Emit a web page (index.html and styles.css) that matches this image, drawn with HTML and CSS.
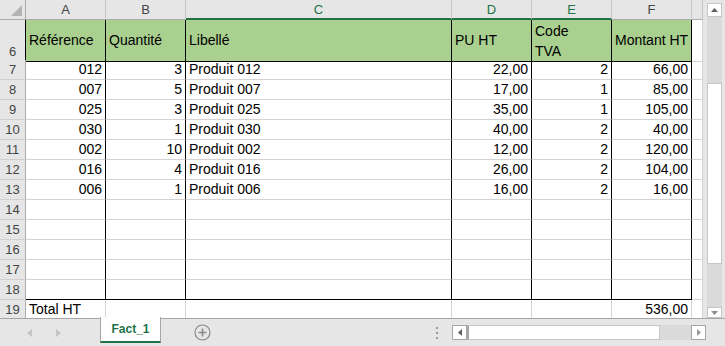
FILE: index.html
```html
<!DOCTYPE html>
<html lang="fr">
<head>
<meta charset="UTF-8">
<title>Fact_1</title>
<link rel="stylesheet" href="styles.css">
</head>
<body>

<div class="top">
  <div class="sheet">
    <div class="row cols">
      <div class="corner">
        <svg width="25" height="19" viewBox="0 0 25 19"><polygon points="22,5 22,16 11,16" fill="#b4b4b4"/></svg>
      </div>
      <div>A</div>
      <div>B</div>
      <div class="sel">C</div>
      <div class="sel">D</div>
      <div class="sel">E</div>
      <div>F</div>
      <div></div>
    </div>

    <div class="row titles boxed">
      <div class="rh">6</div>
      <div>Référence</div>
      <div>Quantité</div>
      <div>Libellé</div>
      <div>PU HT</div>
      <div class="wrap">Code<br>TVA</div>
      <div>Montant HT</div>
      <div></div>
    </div>

    <div class="row boxed"><div class="rh">7</div><div class="r">012</div><div class="r">3</div><div>Produit 012</div><div class="r">22,00</div><div class="r">2</div><div class="r">66,00</div><div></div></div>
    <div class="row boxed"><div class="rh">8</div><div class="r">007</div><div class="r">5</div><div>Produit 007</div><div class="r">17,00</div><div class="r">1</div><div class="r">85,00</div><div></div></div>
    <div class="row boxed"><div class="rh">9</div><div class="r">025</div><div class="r">3</div><div>Produit 025</div><div class="r">35,00</div><div class="r">1</div><div class="r">105,00</div><div></div></div>
    <div class="row boxed"><div class="rh">10</div><div class="r">030</div><div class="r">1</div><div>Produit 030</div><div class="r">40,00</div><div class="r">2</div><div class="r">40,00</div><div></div></div>
    <div class="row boxed"><div class="rh">11</div><div class="r">002</div><div class="r">10</div><div>Produit 002</div><div class="r">12,00</div><div class="r">2</div><div class="r">120,00</div><div></div></div>
    <div class="row boxed"><div class="rh">12</div><div class="r">016</div><div class="r">4</div><div>Produit 016</div><div class="r">26,00</div><div class="r">2</div><div class="r">104,00</div><div></div></div>
    <div class="row boxed"><div class="rh">13</div><div class="r">006</div><div class="r">1</div><div>Produit 006</div><div class="r">16,00</div><div class="r">2</div><div class="r">16,00</div><div></div></div>
    <div class="row boxed"><div class="rh">14</div><div></div><div></div><div></div><div></div><div></div><div></div><div></div></div>
    <div class="row boxed"><div class="rh">15</div><div></div><div></div><div></div><div></div><div></div><div></div><div></div></div>
    <div class="row boxed"><div class="rh">16</div><div></div><div></div><div></div><div></div><div></div><div></div><div></div></div>
    <div class="row boxed"><div class="rh">17</div><div></div><div></div><div></div><div></div><div></div><div></div><div></div></div>
    <div class="row boxed end"><div class="rh">18</div><div></div><div></div><div></div><div></div><div></div><div></div><div></div></div>
    <div class="row"><div class="rh">19</div><div>Total HT</div><div></div><div></div><div></div><div></div><div class="r">536,00</div><div></div></div>
  </div>

  <div class="vscroll">
    <div class="sbtn vbtn">
      <svg width="7" height="4" viewBox="0 0 7 4"><polygon points="0,4 7,4 3.5,0" fill="#606060"/></svg>
    </div>
    <div class="vtrack"><div class="vthumb"></div></div>
    <div class="sbtn vbtn down">
      <svg width="7" height="4" viewBox="0 0 7 4"><polygon points="0,0 7,0 3.5,4" fill="#8c8c8c"/></svg>
    </div>
  </div>
</div>

<div class="tabs">
  <div class="tab-nav">
    <svg width="5" height="8" viewBox="0 0 5 8"><polygon points="5,0 5,8 0,4" fill="#c4c4c4"/></svg>
    <svg width="5" height="8" viewBox="0 0 5 8"><polygon points="0,0 0,8 5,4" fill="#c4c4c4"/></svg>
  </div>
  <div class="tab">Fact_1</div>
  <div class="add">
    <svg width="17" height="17" viewBox="0 0 17 17">
      <circle cx="8.5" cy="8.5" r="7.5" fill="none" stroke="#8a8a8a" stroke-width="1.2"/>
      <path d="M8.5 4.5v8M4.5 8.5h8" stroke="#8a8a8a" stroke-width="1.6"/>
    </svg>
  </div>
  <div class="dots"><i></i><i></i><i></i></div>
  <div class="hscroll">
    <div class="sbtn">
      <svg width="4" height="7" viewBox="0 0 4 7"><polygon points="4,0 4,7 0,3.5" fill="#606060"/></svg>
    </div>
    <div class="hthumb"></div>
    <div class="htrack"></div>
    <div class="sbtn">
      <svg width="4" height="7" viewBox="0 0 4 7"><polygon points="0,0 0,7 4,3.5" fill="#9a9a9a"/></svg>
    </div>
  </div>
</div>

</body>
</html>
```

FILE: styles.css
```css
* { box-sizing: border-box; }
body { margin:0; width:725px; height:346px; overflow:hidden; background:#fff; font-family:"Liberation Sans", Arial, sans-serif; }

.top { display:flex; height:318px; }
.sheet { width:703px; height:318px; overflow:hidden; }

.row {
    display:grid;
    grid-template-columns:26px 80px 80px 266px 80px 80px 80px 11px;
    height:20px;
}
.row > div {
    border-right:1px solid #d4d4d4;
    border-bottom:1px solid #d4d4d4;
    padding:0 3px;
    font-size:14px;
    line-height:19px;
    color:#000;
    white-space:nowrap;
    overflow:hidden;
}
.r { text-align:right; }

/* column letters */
.cols > div {
    background:#e6e6e6;
    color:#444;
    font-size:13px;
    text-align:center;
    border-right-color:#c6c6c6;
    border-bottom-color:#ababab;
}
.cols .sel { color:#217346; border-bottom:2px solid #217346; }
.cols .corner { padding:0; border-right-color:#ababab; }
.corner svg { display:block; }

/* row numbers */
.row > .rh {
    background:#e6e6e6;
    color:#444;
    font-size:13px;
    text-align:center;
    padding:0;
    border-right-color:#ababab;
    border-bottom-color:#d0d0d0;
}

/* green title row */
.titles { height:40px; }
.titles > div { display:flex; align-items:center; }
.titles > div:nth-child(n+2):nth-child(-n+7) { background:#a9d08e; border-bottom-color:#000; }
.titles > .rh { align-items:flex-end; justify-content:center; border-right-color:#000; }
.titles > .wrap { align-items:flex-start; padding-top:1px; line-height:20px; overflow:visible; }

.boxed > div:nth-child(n+2):nth-child(-n+7) { border-right-color:#000; }
.end > div:nth-child(n+2):nth-child(-n+7) { border-bottom-color:#000; }

/* vertical scrollbar */
.vscroll {
    flex:1;
    background:#e6e6e6;
    display:flex;
    flex-direction:column;
    padding:3px 0 0 4px;
}
.sbtn {
    width:15px;
    height:14px;
    background:#fff;
    border:1px solid #c6c6c6;
    display:flex;
    align-items:center;
    justify-content:center;
    flex-shrink:0;
}
.sbtn svg { display:block; }
.vbtn.down { height:11px; align-items:flex-start; padding-top:3px; }
.vtrack { width:15px; flex:1; background:#dadada; }
.vthumb { margin-top:66px; height:181px; background:#fff; border:1px solid #c6c6c6; }

/* sheet tabs */
.tabs {
    height:28px;
    background:#e6e6e6;
    border-top:1px solid #a6a6a6;
    display:flex;
    align-items:center;
}
.tab-nav { width:100px; display:flex; align-items:center; padding-left:27px; gap:24px; }
.tab-nav svg { display:block; }
.tab {
    width:61px;
    height:26px;
    margin-top:-2px;
    align-self:flex-start;
    background:#fff;
    border-left:1px solid #a6a6a6;
    border-right:1px solid #a6a6a6;
    border-bottom:2px solid #217346;
    color:#217346;
    font-weight:bold;
    font-size:12px;
    line-height:24px;
    text-align:center;
}
.add { margin-left:33px; width:17px; height:17px; }
.add svg { display:block; }
.dots { margin-left:auto; display:flex; flex-direction:column; gap:3px; }
.dots i { display:block; width:2px; height:2px; background:#9a9a9a; }

.hscroll { margin-left:14px; margin-right:19px; width:254px; height:15px; display:flex; }
.hscroll .sbtn { height:15px; border-color:#a6a6a6; }
.hthumb { width:193px; background:#fff; border:1px solid #c6c6c6; border-left:2px solid #a6a6a6; }
.htrack { width:31px; background:#dadada; }
```
